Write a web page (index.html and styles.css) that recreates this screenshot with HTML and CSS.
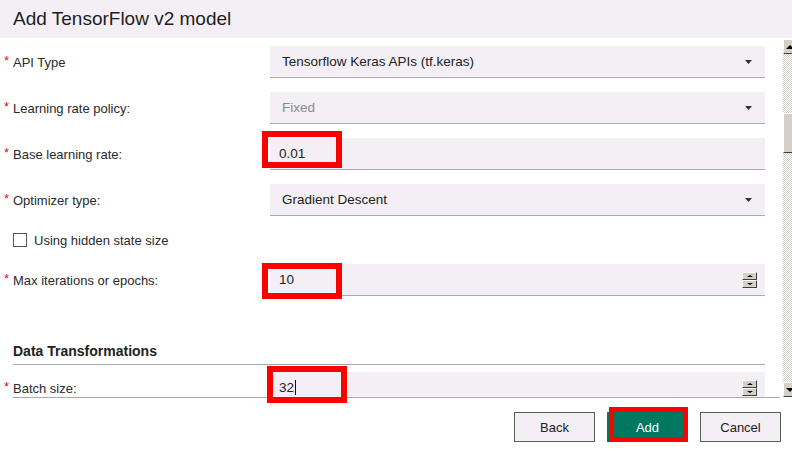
FILE: index.html
```html
<!DOCTYPE html>
<html>
<head>
<meta charset="utf-8">
<title>Add TensorFlow v2 model</title>
<link rel="stylesheet" href="styles.css">
</head>
<body>
<div class="dialog">
  <div class="title">Add TensorFlow v2 model</div>
  <div class="frame">
    <div class="form">
      <div class="row">
        <span class="lbl req">API Type</span>
        <div class="box select"><span>Tensorflow Keras APIs (tf.keras)</span><svg class="caret" width="7" height="4" viewBox="0 0 7 4"><polygon points="0,0 7,0 3.5,4"/></svg></div>
      </div>
      <div class="row">
        <span class="lbl req">Learning rate policy:</span>
        <div class="box select"><span class="muted">Fixed</span><svg class="caret" width="7" height="4" viewBox="0 0 7 4"><polygon points="0,0 7,0 3.5,4"/></svg></div>
      </div>
      <div class="row">
        <span class="lbl req">Base learning rate:</span>
        <div class="box input"><span>0.01</span></div>
      </div>
      <div class="row">
        <span class="lbl req">Optimizer type:</span>
        <div class="box select"><span>Gradient Descent</span><svg class="caret" width="7" height="4" viewBox="0 0 7 4"><polygon points="0,0 7,0 3.5,4"/></svg></div>
      </div>
      <div class="check-row">
        <span class="checkbox"></span><span>Using hidden state size</span>
      </div>
      <div class="row">
        <span class="lbl req">Max iterations or epochs:</span>
        <div class="box input"><span>10</span>
          <div class="spin"><span class="spin-btn"><i class="up"></i></span><span class="spin-btn"><i class="down"></i></span></div>
        </div>
      </div>
      <div class="section">Data Transformations</div>
      <div class="row">
        <span class="lbl req">Batch size:</span>
        <div class="box input batch"><span class="caret-text">32</span>
          <div class="spin"><span class="spin-btn"><i class="up"></i></span><span class="spin-btn"><i class="down"></i></span></div>
        </div>
      </div>
    </div>
    <div class="scrollbar">
      <div class="sb-btn"><i class="up"></i></div>
      <div class="sb-track"><div class="sb-thumb"></div></div>
      <div class="sb-btn"><i class="down"></i></div>
    </div>
  </div>
  <div class="rule"></div>
  <div class="actions">
    <button class="btn">Back</button>
    <button class="btn primary">Add</button>
    <button class="btn">Cancel</button>
  </div>
  <div class="mark m1"></div>
  <div class="mark m2"></div>
  <div class="mark m3"></div>
  <div class="mark m4"></div>
</div>
</body>
</html>
```
FILE: styles.css
```css
* { box-sizing: border-box; }
html, body { margin: 0; padding: 0; background: #fff; }
body {
  width: 792px;
  height: 455px;
  overflow: hidden;
  font-family: "Liberation Sans", Arial, sans-serif;
  font-size: 13px;
  color: #2a2a2a;
}
.dialog { position: relative; width: 792px; height: 455px; }
.title {
  height: 38px;
  line-height: 38px;
  padding-left: 13px;
  background: #f3eff5;
  font-size: 19px;
  color: #1e1e1e;
}
.frame { display: flex; height: 359px; }
.form {
  flex: 1;
  overflow: hidden;
  display: flex;
  flex-direction: column;
  padding: 8px 18px 0 13px;
}
.row {
  display: grid;
  grid-template-columns: 257px 1fr;
  align-items: center;
  height: 32px;
  margin-bottom: 14px;
  flex: none;
}
.lbl { position: relative; }
.req::before {
  content: "*";
  position: absolute;
  left: -9px;
  top: -2px;
  color: #e0102a;
  font-size: 13px;
}
.box {
  height: 32px;
  background: #f3eff5;
  border-bottom: 1px solid #a3abb3;
  display: flex;
  align-items: center;
  justify-content: space-between;
  font-size: 13.5px;
  color: #222;
}
.select { padding: 0 13px 0 12px; }
.input { padding: 0 8px 0 9px; }
.caret { fill: #333; }
.muted { color: #8a8a8a; }
.caret-text { border-right: 1px solid #111; padding-right: 1px; line-height: 15px; }
.check-row {
  display: flex;
  align-items: center;
  gap: 7px;
  height: 20px;
  margin-bottom: 14px;
  flex: none;
}
.checkbox {
  width: 14px;
  height: 14px;
  border: 1.5px solid #555;
  background: #fff;
}
.spin { display: flex; flex-direction: column; width: 15px; }
.spin-btn {
  height: 8px;
  background: #d4d0c8;
  border-top: 1px solid #fff;
  border-left: 1px solid #fff;
  border-right: 1px solid #404040;
  border-bottom: 1px solid #404040;
  display: flex;
  align-items: center;
  justify-content: center;
}
.spin-btn i, .sb-btn i { width: 0; height: 0; border-left: 3px solid transparent; border-right: 3px solid transparent; }
.spin-btn i.up { border-bottom: 2px solid #000; }
.spin-btn i.down { border-top: 2px solid #000; }
.section {
  margin-top: 31px;
  margin-bottom: 7px;
  line-height: 20px;
  padding-bottom: 3px;
  border-bottom: 1px solid #a8a8a8;
  font-weight: bold;
  font-size: 14px;
  color: #222;
  flex: none;
}
.scrollbar {
  width: 9px;
  margin-top: 1px;
  display: flex;
  flex-direction: column;
}
.sb-btn {
  height: 15px;
  background: #d4d0c8;
  border-top: 1px solid #fff;
  border-left: 1px solid #fff;
  border-bottom: 1px solid #404040;
  display: flex;
  align-items: center;
  padding-left: 2px;
}
.sb-btn i.up { border-bottom: 4px solid #000; border-left-width: 4px; border-right-width: 4px; }
.sb-btn i.down { border-top: 4px solid #000; border-left-width: 4px; border-right-width: 4px; }
.sb-track {
  flex: 1;
  padding-top: 59px;
  background: repeating-conic-gradient(#d4d0c8 0 25%, #fff 0 50%) 0 0 / 2px 2px;
}
.sb-thumb {
  height: 40px;
  background: #d4d0c8;
  border-top: 1px solid #fff;
  border-left: 1px solid #fff;
  border-bottom: 1px solid #404040;
}
.rule {
  margin: 0 12px 0 13px;
  border-top: 1px solid #a3abb3;
}
.actions {
  display: flex;
  justify-content: flex-end;
  gap: 12px;
  padding: 14px 11px 0 0;
}
.btn {
  width: 81px;
  height: 30px;
  background: #f3eff5;
  border: 1px solid #5c5c5c;
  font-family: "Liberation Sans", Arial, sans-serif;
  font-size: 13px;
  color: #222;
  padding: 0;
}
.primary { background: #00775f; border-color: #00775f; color: #fff; }
.mark { position: absolute; border: 6px solid #f00; }
.m1 { left: 262px; top: 131px; width: 80px; height: 37px; }
.m2 { left: 262px; top: 263px; width: 80px; height: 36px; }
.m3 { left: 267px; top: 366px; width: 80px; height: 37px; }
.m4 { left: 609px; top: 407px; width: 79px; height: 35px; border-width: 5px; }
```
